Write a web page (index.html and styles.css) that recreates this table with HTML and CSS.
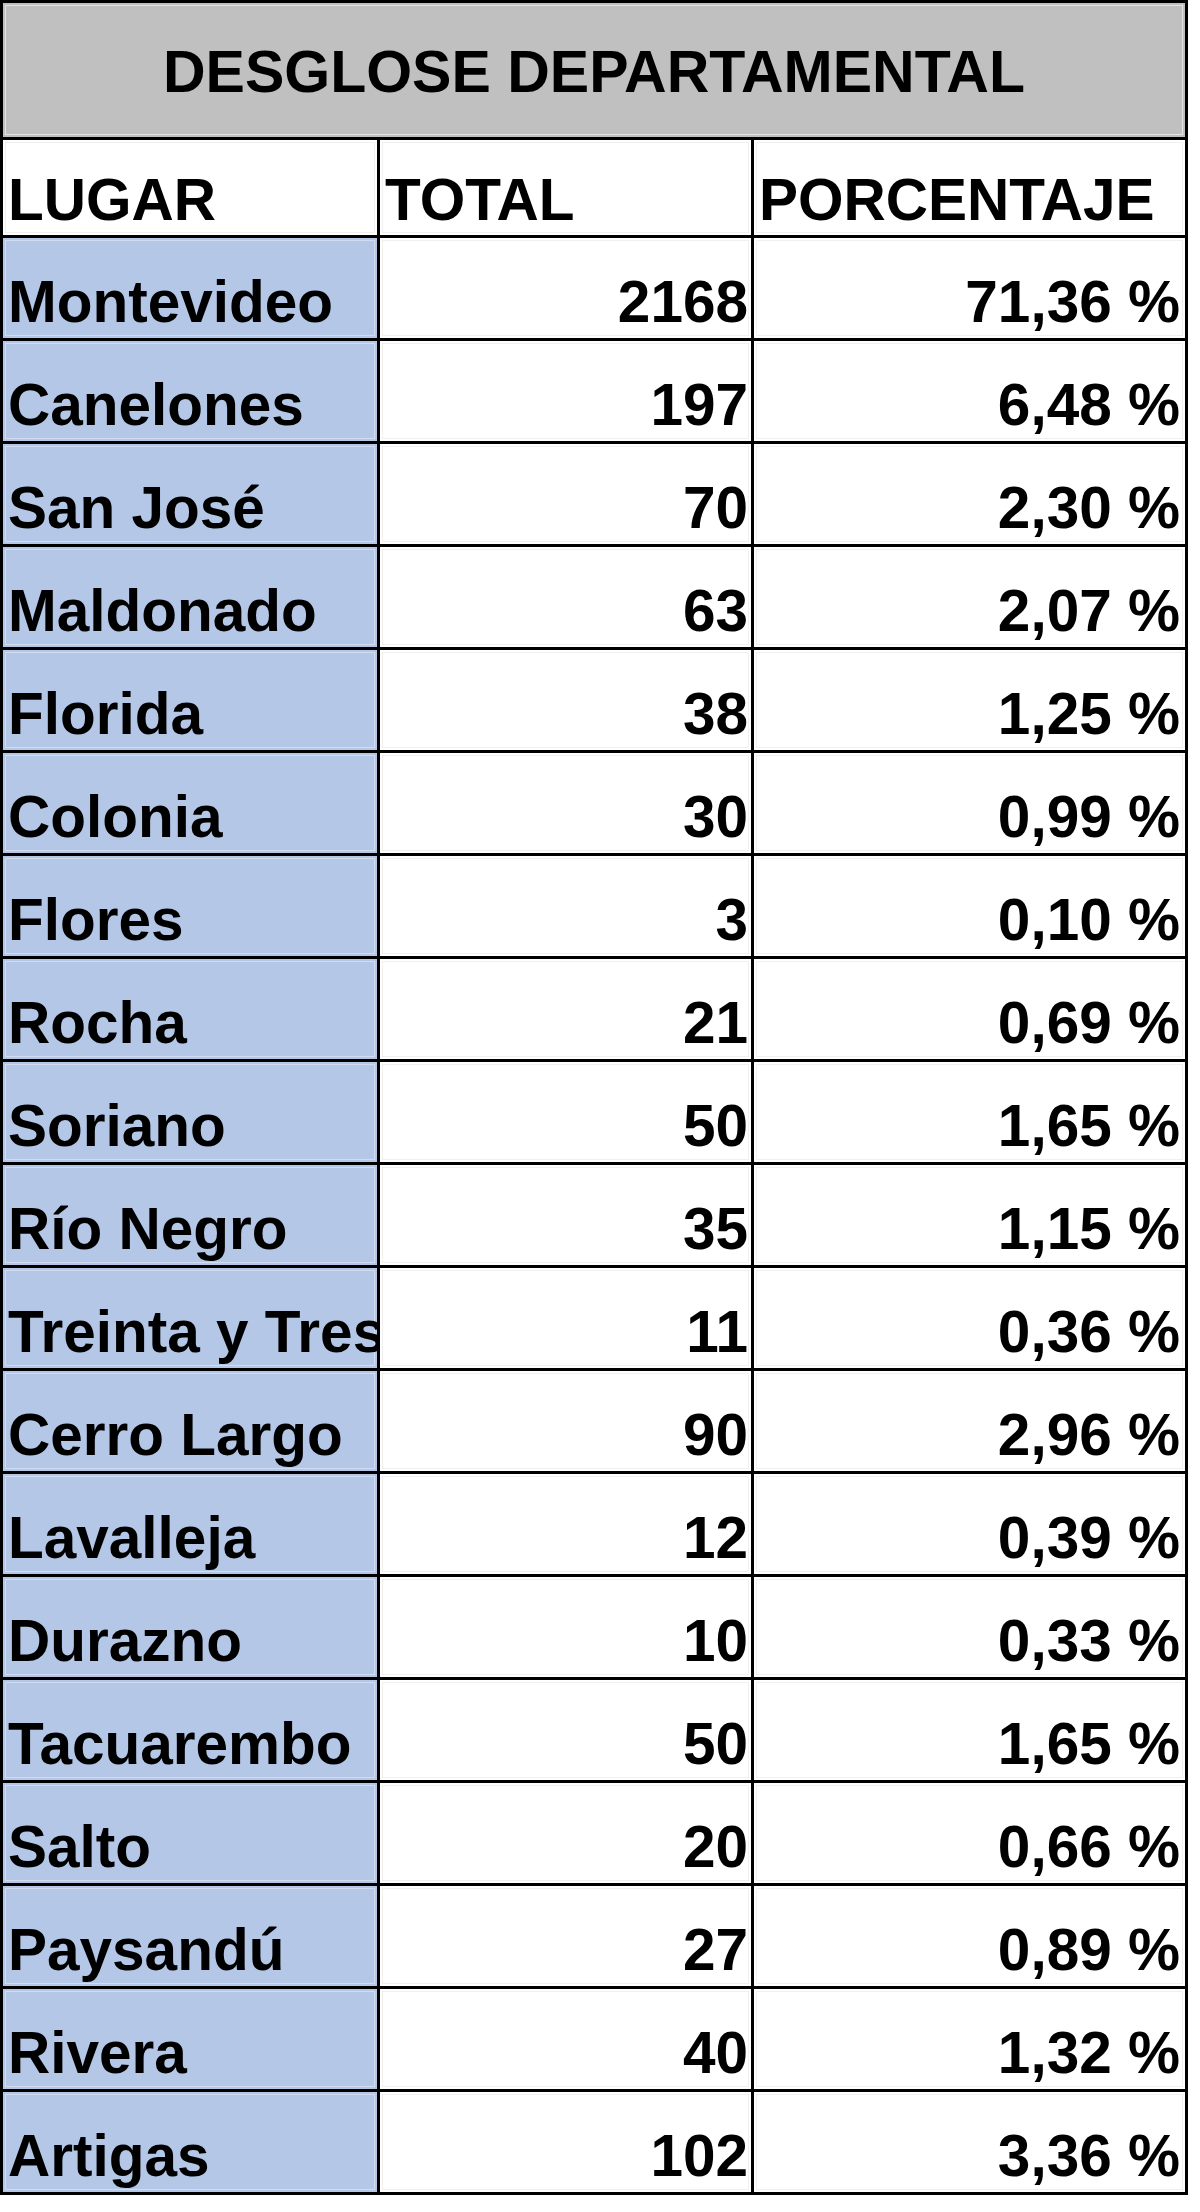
FILE: index.html
```html
<!DOCTYPE html>
<html lang="es">
<head>
<meta charset="utf-8">
<title>Desglose departamental</title>
<link rel="stylesheet" href="styles.css">
</head>
<body>
<div class="sheet">
  <div class="title">DESGLOSE DEPARTAMENTAL</div>
  <div class="cell head">LUGAR</div>
  <div class="cell head">TOTAL</div>
  <div class="cell head">PORCENTAJE</div>

  <div class="cell place">Montevideo</div><div class="cell num">2168</div><div class="cell pct">71,36 %</div>
  <div class="cell place">Canelones</div><div class="cell num">197</div><div class="cell pct">6,48 %</div>
  <div class="cell place">San José</div><div class="cell num">70</div><div class="cell pct">2,30 %</div>
  <div class="cell place">Maldonado</div><div class="cell num">63</div><div class="cell pct">2,07 %</div>
  <div class="cell place">Florida</div><div class="cell num">38</div><div class="cell pct">1,25 %</div>
  <div class="cell place">Colonia</div><div class="cell num">30</div><div class="cell pct">0,99 %</div>
  <div class="cell place">Flores</div><div class="cell num">3</div><div class="cell pct">0,10 %</div>
  <div class="cell place">Rocha</div><div class="cell num">21</div><div class="cell pct">0,69 %</div>
  <div class="cell place">Soriano</div><div class="cell num">50</div><div class="cell pct">1,65 %</div>
  <div class="cell place">Río Negro</div><div class="cell num">35</div><div class="cell pct">1,15 %</div>
  <div class="cell place">Treinta y Tres</div><div class="cell num">11</div><div class="cell pct">0,36 %</div>
  <div class="cell place">Cerro Largo</div><div class="cell num">90</div><div class="cell pct">2,96 %</div>
  <div class="cell place">Lavalleja</div><div class="cell num">12</div><div class="cell pct">0,39 %</div>
  <div class="cell place">Durazno</div><div class="cell num">10</div><div class="cell pct">0,33 %</div>
  <div class="cell place">Tacuarembo</div><div class="cell num">50</div><div class="cell pct">1,65 %</div>
  <div class="cell place">Salto</div><div class="cell num">20</div><div class="cell pct">0,66 %</div>
  <div class="cell place">Paysandú</div><div class="cell num">27</div><div class="cell pct">0,89 %</div>
  <div class="cell place">Rivera</div><div class="cell num">40</div><div class="cell pct">1,32 %</div>
  <div class="cell place">Artigas</div><div class="cell num">102</div><div class="cell pct">3,36 %</div>
</div>
</body>
</html>
```
FILE: styles.css
```css
html, body {
  margin: 0;
  padding: 0;
  background: #ffffff;
}

body {
  font-family: "Liberation Sans", Arial, sans-serif;
  font-weight: bold;
  color: #000000;
}

.sheet {
  width: 1188px;
  box-sizing: border-box;
  background: #000000;
  padding: 3px;
  display: grid;
  grid-template-columns: 374px 371px 431px;
  grid-template-rows: 134px 95px repeat(19, 100px);
  gap: 3px;
}

.title {
  grid-column: 1 / -1;
  background: #c0c0c0;
  box-shadow: inset 0 0 0 2px #c0c0c0, inset 0 0 0 3px #e4e4e4;
  display: flex;
  align-items: center;
  justify-content: center;
  font-size: 59px;
  padding-top: 4px;
  box-sizing: border-box;
}

.cell {
  background: #ffffff;
  box-shadow: inset 0 0 0 2px #ffffff, inset 0 0 0 3px #f0f0f0;
  display: flex;
  align-items: flex-end;
  font-size: 58.5px;
  line-height: 66px;
  white-space: nowrap;
  overflow: hidden;
  padding-bottom: 3px;
  box-sizing: border-box;
}

.head {
  padding-left: 5px;
  padding-bottom: 2px;
}

.place {
  background: #b4c7e7;
  box-shadow: inset 0 0 0 2px #b4c7e7, inset 0 0 0 3px #cfdcf2;
  padding-left: 5px;
}

.num {
  justify-content: flex-end;
  padding-right: 3px;
}

.pct {
  justify-content: flex-end;
  padding-right: 5px;
}
```
